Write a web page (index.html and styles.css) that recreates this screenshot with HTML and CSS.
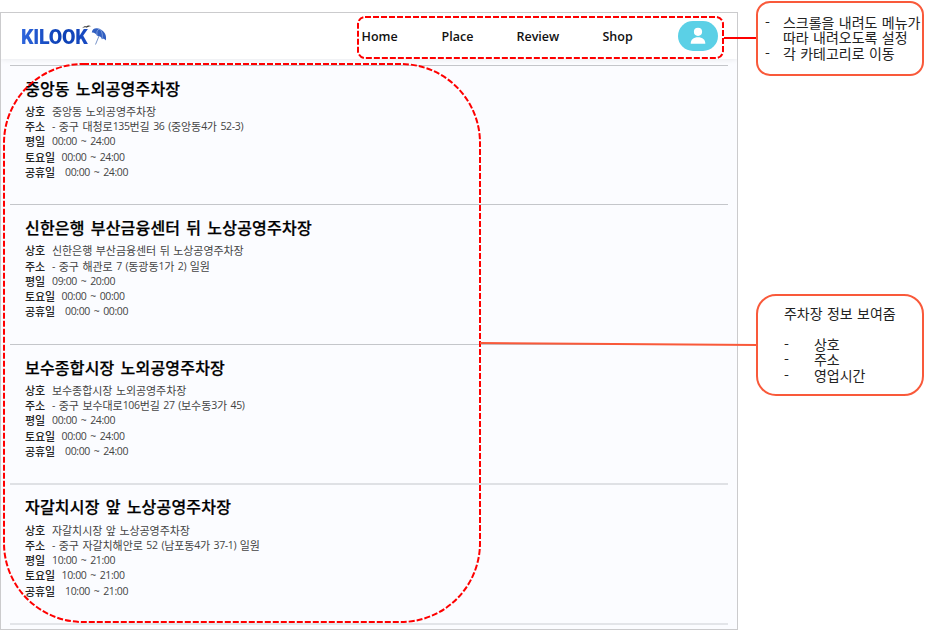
FILE: index.html
```html
<!DOCTYPE html>
<html lang="ko">
<head>
<meta charset="utf-8">
<title>KILOOK</title>
<link rel="stylesheet" href="styles.css">
</head>
<body>
<div class="board">
  <div class="window">
    <header class="header">
      <div class="logo">
        <span class="logo-text">KILOOK</span>
        <svg class="logo-art" width="28" height="26" viewBox="0 0 28 26">
          <path d="M0 6.300C1.500 4.400 3 3.900 4.200 4.400C5.500 3.400 7.300 3.300 9.300 4.200C7.300 4.200 6 4.700 4.800 5.700C3.400 4.900 1.800 5.200 0 6.300Z" fill="#333"/>
          <path d="M9.800 10.500C10 6.300 14.500 5 18.500 7.200C22.500 9.400 25 13.500 23.800 18.500C22.500 16.800 21.300 16.500 20 17.200C19 14.700 17.400 13.600 15.300 14.100C14 11.500 12.300 10.300 9.800 10.500Z" fill="#315fc0"/>
          <path d="M18 7C14.500 7.500 14.500 11 15.300 14.100M18 7C20.500 10 20.800 14 20 17.200" fill="none" stroke="#a9c0ee" stroke-width=".6"/>
          <path d="M17 14L13.500 22.500" stroke="#7894ca" stroke-width="1" fill="none"/>
        </svg>
      </div>
      <nav class="nav">
        <a class="home">Home</a>
        <a class="place">Place</a>
        <a class="review">Review</a>
        <a class="shop">Shop</a>
        <span class="avatar">
          <svg width="16" height="18" viewBox="0 0 16 18">
            <circle cx="8" cy="4.800" r="4.100" fill="#fff"/>
            <path d="M.700 16.800C.700 12.500 3.500 10.200 8 10.200S15.300 12.500 15.300 16.800Z" fill="#fff"/>
          </svg>
        </span>
      </nav>
    </header>
    <main class="list">
      <section class="item">
        <h2>중앙동 노외공영주차장</h2>
        <p><b>상호</b>중앙동 노외공영주차장</p>
        <p><b>주소</b><i>- </i>중구 대청로<i>135</i>번길 <i>36 (</i>중앙동<i>4</i>가 <i>52-3)</i></p>
        <p><b>평일</b><i>00:00 ~ 24:00</i></p>
        <p><b class="sat">토요일</b><i>00:00 ~ 24:00</i></p>
        <p><b class="hol">공휴일</b><i>00:00 ~ 24:00</i></p>
      </section>
      <section class="item">
        <h2>신한은행 부산금융센터 뒤 노상공영주차장</h2>
        <p><b>상호</b>신한은행 부산금융센터 뒤 노상공영주차장</p>
        <p><b>주소</b><i>- </i>중구 해관로 <i>7 (</i>동광동<i>1</i>가 <i>2)</i> 일원</p>
        <p><b>평일</b><i>09:00 ~ 20:00</i></p>
        <p><b class="sat">토요일</b><i>00:00 ~ 00:00</i></p>
        <p><b class="hol">공휴일</b><i>00:00 ~ 00:00</i></p>
      </section>
      <section class="item">
        <h2>보수종합시장 노외공영주차장</h2>
        <p><b>상호</b>보수종합시장 노외공영주차장</p>
        <p><b>주소</b><i>- </i>중구 보수대로<i>106</i>번길 <i>27 (</i>보수동<i>3</i>가 <i>45)</i></p>
        <p><b>평일</b><i>00:00 ~ 24:00</i></p>
        <p><b class="sat">토요일</b><i>00:00 ~ 24:00</i></p>
        <p><b class="hol">공휴일</b><i>00:00 ~ 24:00</i></p>
      </section>
      <section class="item pale">
        <h2>자갈치시장 앞 노상공영주차장</h2>
        <p><b>상호</b>자갈치시장 앞 노상공영주차장</p>
        <p><b>주소</b><i>- </i>중구 자갈치해안로 <i>52 (</i>남포동<i>4</i>가 <i>37-1)</i> 일원</p>
        <p><b>평일</b><i>10:00 ~ 21:00</i></p>
        <p><b class="sat">토요일</b><i>10:00 ~ 21:00</i></p>
        <p><b class="hol">공휴일</b><i>10:00 ~ 21:00</i></p>
      </section>
      <div class="end"></div>
    </main>
  </div>
  <aside class="notes">
    <div class="note note-menu">
      <ul>
        <li>스크롤을 내려도 메뉴가<br>따라 내려오도록 설정</li>
        <li>각 카테고리로 이동</li>
      </ul>
    </div>
    <div class="note note-info">
      <p>주차장 정보 보여줌</p>
      <ul>
        <li>상호</li>
        <li>주소</li>
        <li>영업시간</li>
      </ul>
    </div>
  </aside>
  <svg class="marks" width="949" height="632" viewBox="0 0 949 632" fill="none" stroke-width="2">
    <rect x="358" y="17" width="365" height="41" rx="7" stroke="#fe0000" stroke-dasharray="6 2"/>
    <rect x="4" y="64" width="476" height="558" rx="79" stroke="#fe0000" stroke-dasharray="6 2"/>
    <path d="M724 38H756" stroke="#fe0000"/>
    <path d="M480 343L757 345" stroke="#f9593a"/>
  </svg>
</div>
</body>
</html>
```

FILE: styles.css
```css
* { box-sizing: border-box; }
body { margin: 0; background: #fff; font-family: "Noto Sans CJK KR", sans-serif; overflow: hidden; }
.board { position: relative; display: flex; width: 949px; height: 632px; }
.window { width: 738px; height: 618px; margin-top: 12px; border: 1px solid #cbcbcd; background: #fbfcff; overflow: hidden; }
.header { display: flex; align-items: center; justify-content: space-between; height: 46px; padding: 0 19.500px 0 20px; background: #fff; box-shadow: 0 1px 5px rgba(0, 0, 0, .07); }
.logo { display: flex; align-items: center; }
.logo-text { width: 68px; padding-top: 4px; font: 900 19.500px/26px Roboto, sans-serif; letter-spacing: -.2px; background: linear-gradient(90deg, #2f66dd, #0b3fb4 60%, #1a4cc4); background-clip: text; -webkit-background-clip: text; color: transparent; white-space: nowrap; }
.logo-art { margin-left: -7px; margin-top: -2px; }
.nav { display: flex; align-items: center; width: 356px; font: 600 12.5px/20px "Open Sans", sans-serif; color: #111; }
.nav a { padding-top: 1px; }
.home { width: 80px; }
.place { width: 75px; }
.review { width: 86px; }
.shop { width: 75px; }
.avatar { display: flex; align-items: center; justify-content: center; flex: none; width: 40px; height: 30px; border-radius: 15px; background: #5bd0e6; }
.list { padding: 5.600px 9px 0; }
.item { height: 139.600px; border-top: 1px solid #c4c6ca; padding: 11px 0 0 15px; white-space: nowrap; }
.pale { border-top: 2px solid #dfe1e5; padding-top: 10px; }
.end { height: 2px; background: #e3e5e9; }
.item h2 { margin: 0 0 4.200px; font-size: 16px; line-height: 23px; font-weight: 500; letter-spacing: .2px; word-spacing: 1.400px; color: #000; -webkit-text-stroke: .25px #000; }
.item p { display: flex; margin: 0; font-size: 11px; line-height: 15.250px; color: #444; letter-spacing: -.06px; word-spacing: .500px; white-space: pre; }
.item b { flex: none; width: 27px; font-weight: 500; color: #222; }
.item b.sat { width: 36.500px; }
.item b.hol { width: 40px; }
.item i { font: normal 10.500px/15.250px "Open Sans", sans-serif; letter-spacing: -.36px; word-spacing: 1.400px; }
.notes { display: flex; flex-direction: column; width: 168px; margin: 1px 0 0 18px; }
.note { border: 2px solid #f9593a; background: #fff; font-size: 14px; line-height: 15.600px; letter-spacing: -.02px; word-spacing: .5px; color: #222; white-space: nowrap; }
.note ul { margin: 0; padding: 0; list-style: none; }
.note li { display: flex; }
.note li::before { content: "-"; flex: none; }
.note-menu { height: 75px; border-radius: 14px; padding: 11.500px 0 0 7px; }
.note-menu li::before { width: 18px; }
.note-info { height: 102px; margin-top: 218px; border-radius: 20px; padding: 9.500px 0 0 26px; }
.note-info p { margin: 0 0 15.600px; }
.note-info li::before { width: 30px; }
.marks { position: absolute; left: 0; top: 0; }
```
